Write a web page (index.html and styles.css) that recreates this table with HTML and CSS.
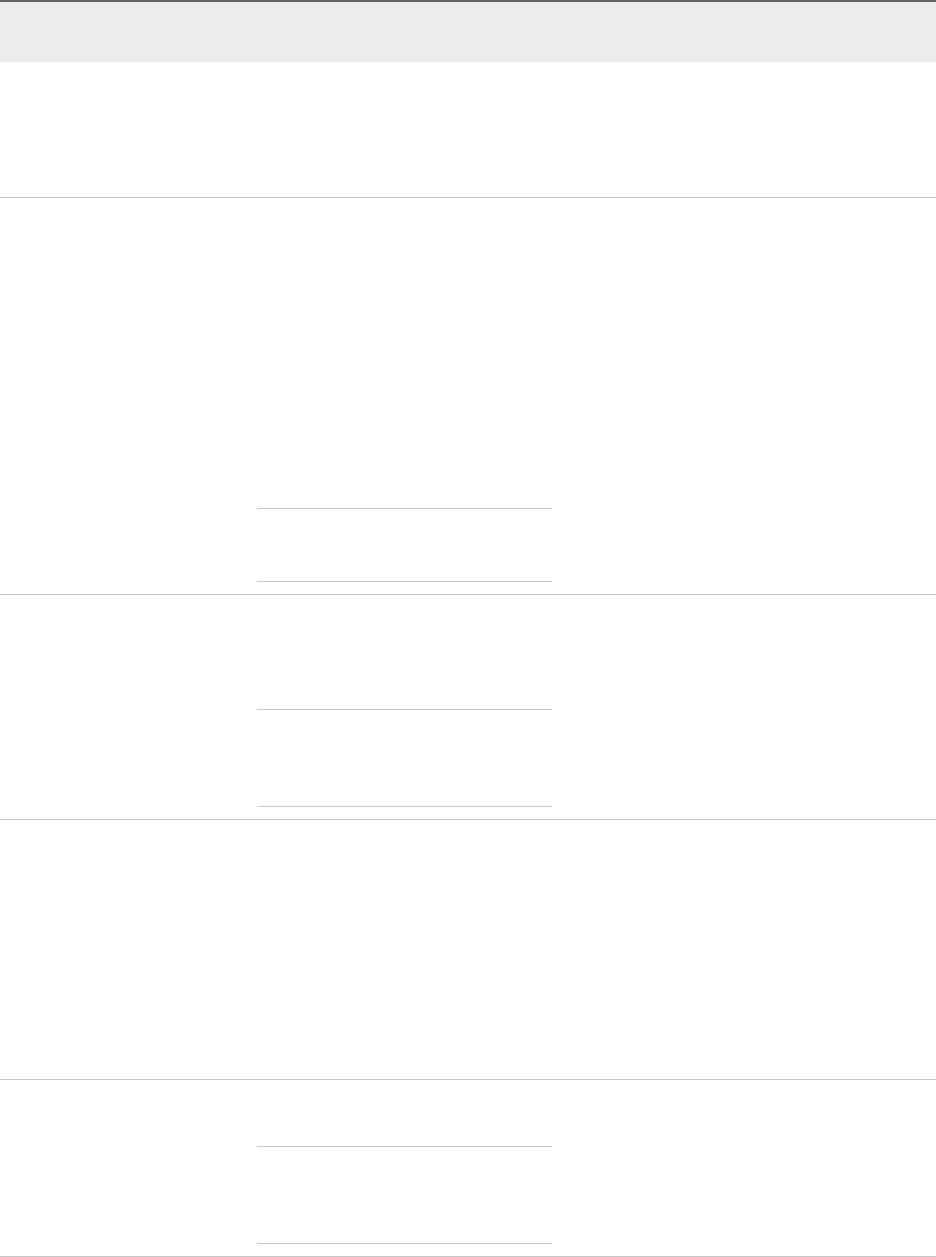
FILE: index.html
```html
<!DOCTYPE html>
<html lang="en">
<head>
<meta charset="utf-8">
<title>Table</title>
<link rel="stylesheet" href="styles.css">
</head>
<body>
<div class="table">
  <div class="thead"></div>
  <div class="row r1">
    <div class="cell c1"></div>
    <div class="cell c2"></div>
    <div class="cell c3"></div>
  </div>
  <div class="row r2">
    <div class="cell c1"></div>
    <div class="cell c2">
      <div class="lead lead-310"></div>
      <div class="sub sub-72"></div>
    </div>
    <div class="cell c3"></div>
  </div>
  <div class="row r3">
    <div class="cell c1"></div>
    <div class="cell c2">
      <div class="lead lead-114"></div>
      <div class="sub sub-96"></div>
    </div>
    <div class="cell c3"></div>
  </div>
  <div class="row r4">
    <div class="cell c1"></div>
    <div class="cell c2"></div>
    <div class="cell c3"></div>
  </div>
  <div class="row r5">
    <div class="cell c1"></div>
    <div class="cell c2">
      <div class="lead lead-66"></div>
      <div class="sub sub-96"></div>
    </div>
    <div class="cell c3"></div>
  </div>
</div>
</body>
</html>
```
FILE: styles.css
```css
html, body {
  margin: 0;
  padding: 0;
  background: #ffffff;
  font-family: "Liberation Sans", Arial, sans-serif;
}

.table {
  width: 936px;
}

.thead {
  border-top: 2px solid #666666;
  height: 60px;
  background: #ececec;
}

.row {
  display: grid;
  grid-template-columns: 241px 326px 1fr;
  border-bottom: 1px solid #c8c8c8;
}

.r1 { height: 135px; }
.r2 { height: 396px; }
.r3 { height: 224px; }
.r4 { height: 259px; }
.r5 { height: 176px; }

.c2 {
  padding: 0 15px 12px 16px;
  display: flex;
  flex-direction: column;
}

.lead-310 { height: 310px; }
.lead-114 { height: 114px; }
.lead-66 { height: 66px; }

.sub {
  border-top: 1px solid #c8c8c8;
  border-bottom: 1px solid #c8c8c8;
}

.sub-72 { height: 72px; }
.sub-96 { height: 96px; }
```
